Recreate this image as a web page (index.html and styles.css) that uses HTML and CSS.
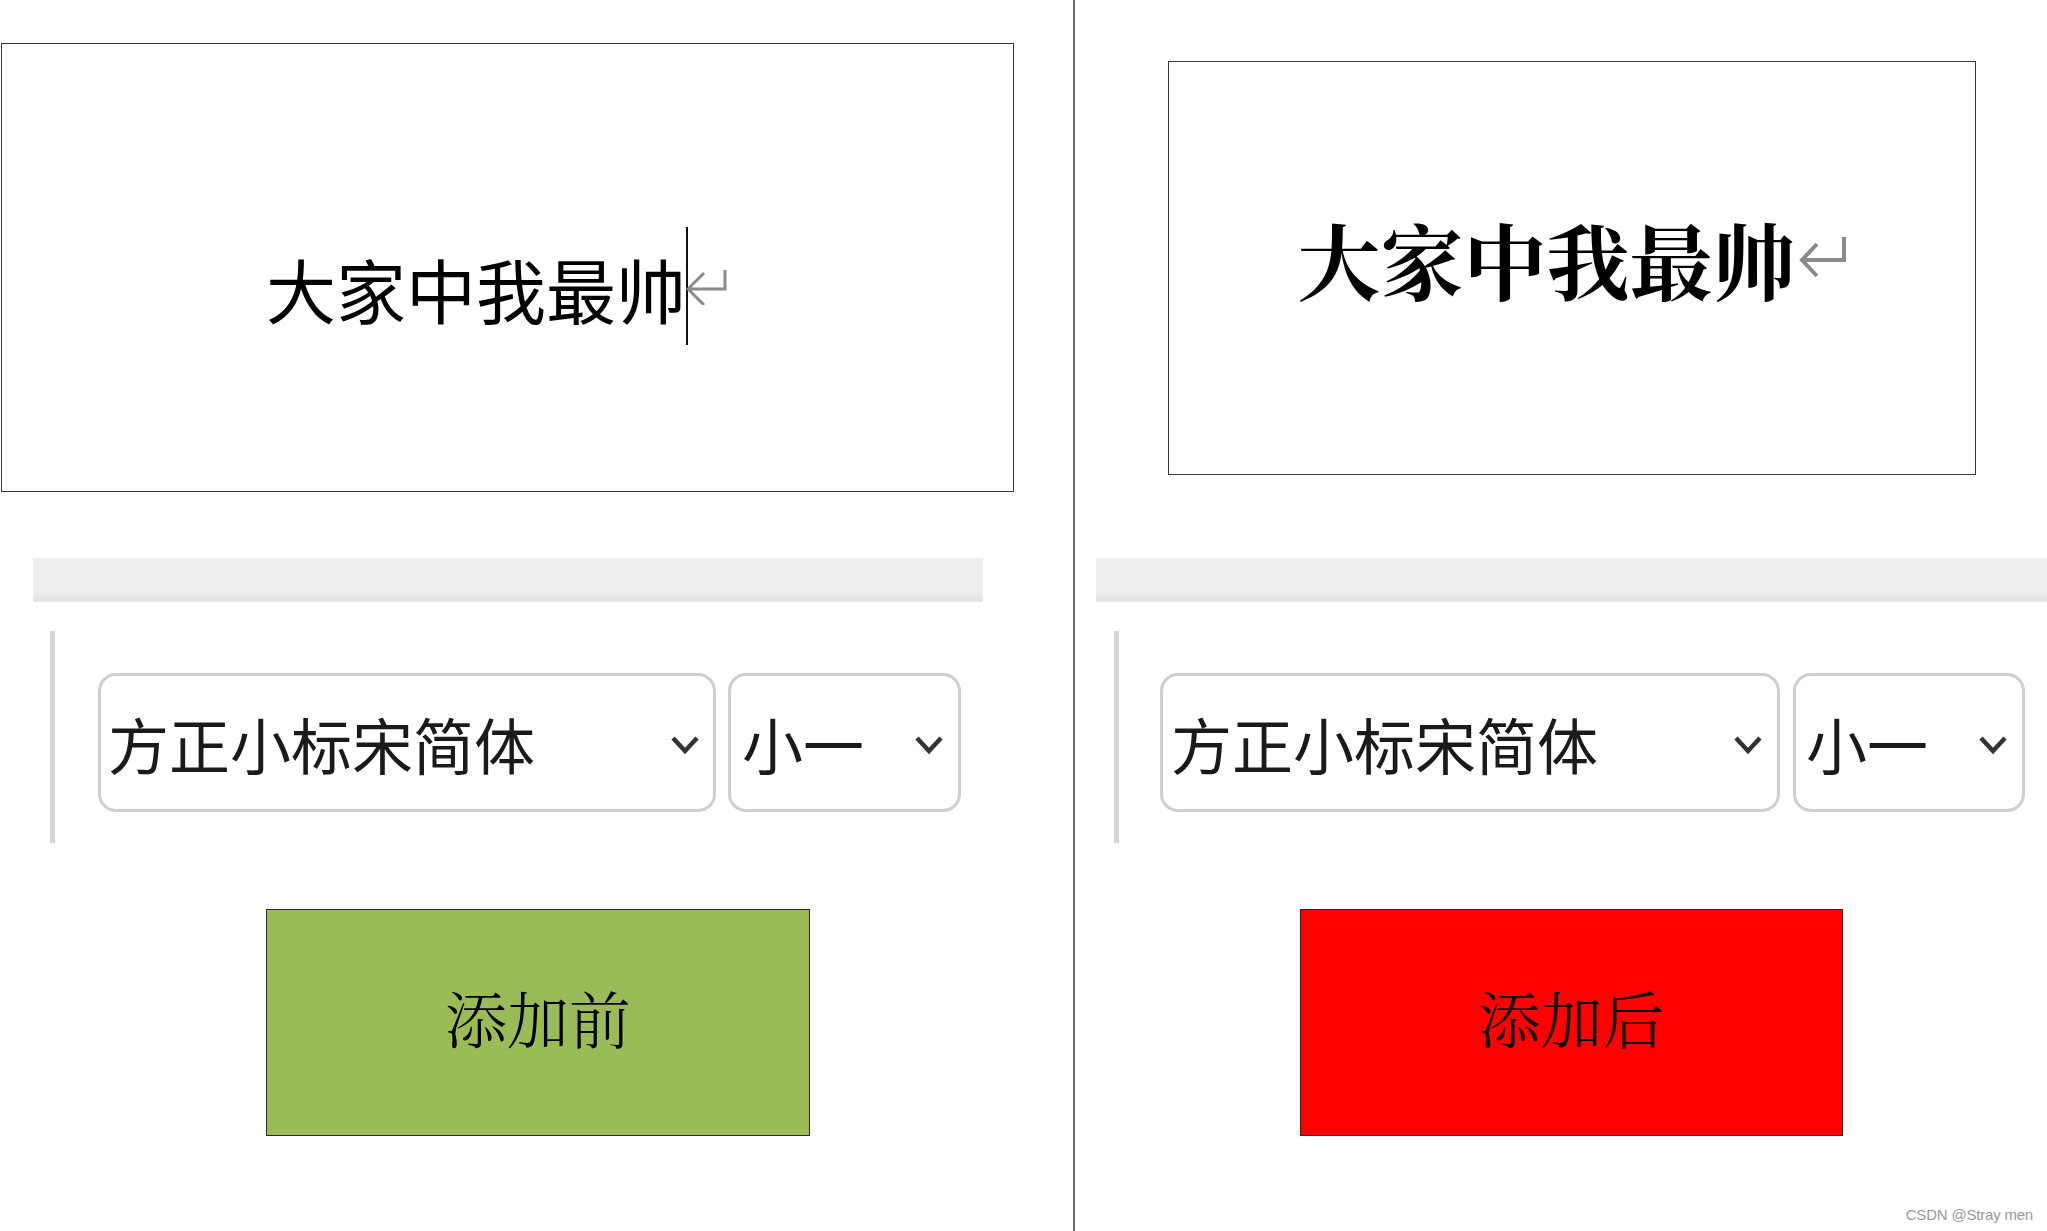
FILE: index.html
```html
<!DOCTYPE html>
<html lang="zh-CN">
<head>
<meta charset="utf-8">
<title>添加前 / 添加后</title>
<link rel="stylesheet" href="styles.css">
</head>
<body>
<div class="page">
  <section class="panel panel-before">
    <div class="doc doc-before">
      <span class="doc-text">大家中我最帅</span>
      <span class="caret"></span>
      <svg class="para para-before" width="41" height="35" viewBox="0 0 41 35"><path d="M39 0 V19 H2 M18 3 L2 19 L18 35" fill="none" stroke="#8a8a8a" stroke-width="3"/></svg>
    </div>
    <div class="ribbon"></div>
    <div class="toolbar">
      <span class="sep"></span>
      <div class="select select-font">
        <span class="select-label">方正小标宋简体</span>
        <svg class="chev" width="30" height="20" viewBox="0 0 30 20"><path d="M3 3 L15 16 L27 3" fill="none" stroke="#333" stroke-width="4.5"/></svg>
      </div>
      <div class="select select-size">
        <span class="select-label">小一</span>
        <svg class="chev" width="30" height="20" viewBox="0 0 30 20"><path d="M3 3 L15 16 L27 3" fill="none" stroke="#333" stroke-width="4.5"/></svg>
      </div>
    </div>
    <div class="swatch swatch-before">添加前</div>
  </section>
  <div class="divider"></div>
  <section class="panel panel-after">
    <div class="doc doc-after">
      <span class="doc-text">大家中我最帅</span>
      <svg class="para para-after" width="48" height="43" viewBox="0 0 48 43"><path d="M45 1 V24 H3 M18 8 L3 24 L18 40" fill="none" stroke="#8a8a8a" stroke-width="4"/></svg>
    </div>
    <div class="ribbon"></div>
    <div class="toolbar">
      <span class="sep"></span>
      <div class="select select-font">
        <span class="select-label">方正小标宋简体</span>
        <svg class="chev" width="30" height="20" viewBox="0 0 30 20"><path d="M3 3 L15 16 L27 3" fill="none" stroke="#333" stroke-width="4.5"/></svg>
      </div>
      <div class="select select-size">
        <span class="select-label">小一</span>
        <svg class="chev" width="30" height="20" viewBox="0 0 30 20"><path d="M3 3 L15 16 L27 3" fill="none" stroke="#333" stroke-width="4.5"/></svg>
      </div>
    </div>
    <div class="swatch swatch-after">添加后</div>
  </section>
  <span class="watermark">CSDN @Stray men</span>
</div>
</body>
</html>
```

FILE: styles.css
```css
html, body {
  margin: 0;
  padding: 0;
  background: #ffffff;
}

body {
  font-family: "Noto Sans CJK SC", "Noto Sans", sans-serif;
  color: #000;
}

.page {
  position: relative;
  display: flex;
  width: 2047px;
  height: 1231px;
  overflow: hidden;
}

.panel {
  display: flex;
  flex-direction: column;
  align-items: flex-start;
  overflow: hidden;
}

.panel-before {
  width: 1073px;
}

.panel-after {
  width: 972px;
}

.divider {
  width: 2px;
  height: 1231px;
  background: #6a6a6a;
  flex-shrink: 0;
}

/* document preview boxes */
.doc {
  box-sizing: border-box;
  border: 1px solid #3a3a3a;
  display: flex;
  align-items: center;
}

.doc-before {
  margin: 43px 0 0 1px;
  width: 1013px;
  height: 449px;
  padding: 42px 0 0 264px;
}

.doc-after {
  margin: 61px 0 0 93px;
  width: 808px;
  height: 414px;
  justify-content: center;
  padding: 0 0 20px 0;
}

.doc-text {
  white-space: nowrap;
  line-height: 1;
}

.doc-before .doc-text {
  font-size: 70px;
  font-weight: 400;
}

.doc-after .doc-text {
  font-family: "Noto Serif CJK SC", "Noto Serif SC", "Noto Sans CJK SC", serif;
  font-size: 83px;
  font-weight: 700;
}

.caret {
  width: 2px;
  height: 118px;
  background: #111;
  margin: -6px -2px 0 0;
  flex-shrink: 0;
}

.para {
  flex-shrink: 0;
}

.para-before {
  margin-top: -2px;
}

.para-after {
  margin-left: 3px;
  margin-top: -2px;
}

/* ribbon strip */
.ribbon {
  height: 44px;
  background: linear-gradient(to bottom, #efefef 0, #efefef 78%, #e2e2e2 96%, #ececec 100%);
}

.panel-before .ribbon {
  margin: 66px 0 0 33px;
  width: 950px;
}

.panel-after .ribbon {
  margin: 83px 0 0 21px;
  width: 960px;
}

/* toolbar with selects */
.toolbar {
  display: flex;
  align-items: flex-start;
  height: 212px;
  margin-top: 29px;
}

.panel-before .toolbar {
  padding-left: 50px;
}

.panel-after .toolbar {
  padding-left: 39px;
}

.sep {
  width: 5px;
  height: 212px;
  background: #d6d6d6;
  flex-shrink: 0;
}

.select {
  box-sizing: border-box;
  height: 139px;
  margin-top: 42px;
  border: 3px solid #cfcfcf;
  border-radius: 18px;
  display: flex;
  align-items: center;
  background: #fff;
}

.select-label {
  font-size: 61px;
  line-height: 1;
  color: #1a1a1a;
  white-space: nowrap;
  margin-top: 2px;
}

.chev {
  margin-left: auto;
  margin-top: 4px;
  flex-shrink: 0;
}

.panel-before .select-font {
  margin-left: 43px;
  width: 618px;
  padding: 0 13px 0 7px;
}

.panel-before .select-size {
  margin-left: 12px;
  width: 233px;
  padding: 0 14px 0 11px;
}

.panel-after .select-font {
  margin-left: 41px;
  width: 620px;
  padding: 0 14px 0 8px;
}

.panel-after .select-size {
  margin-left: 13px;
  width: 232px;
  padding: 0 14px 0 10px;
}

/* colour swatches */
.swatch {
  box-sizing: border-box;
  height: 227px;
  margin-top: 66px;
  border: 1px solid #2a2a2a;
  display: flex;
  align-items: center;
  justify-content: center;
  font-family: "Noto Serif CJK SC", "Noto Serif SC", "Noto Sans CJK SC", serif;
  font-size: 62px;
  font-weight: 300;
  line-height: 1;
  color: #000;
  padding-bottom: 10px;
}

.swatch-before {
  margin-left: 266px;
  width: 544px;
  background: #9bbb59;
}

.swatch-after {
  margin-left: 225px;
  width: 543px;
  background: #ff0000;
}

.watermark {
  position: absolute;
  right: 14px;
  bottom: 8px;
  font-family: "Liberation Sans", Arial, sans-serif;
  font-size: 15px;
  color: #9a9a9a;
  letter-spacing: -0.2px;
}
```
